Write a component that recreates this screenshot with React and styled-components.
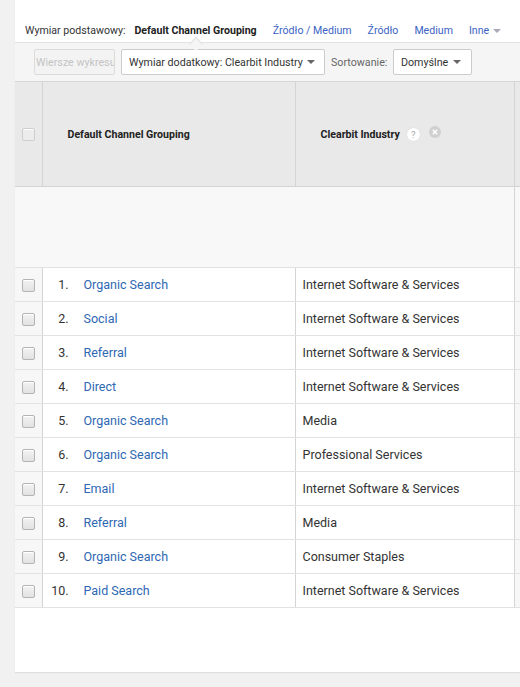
import React from "react";
import styled, { createGlobalStyle } from "styled-components";

const Global = createGlobalStyle`
  html, body { margin: 0; padding: 0; background: #f1f1f1; }
  body { font-family: Roboto, "Liberation Sans", Arial, sans-serif; color: #333; }
`;

const Page = styled.div`
  padding-left: 15px;
  height: 687px;
  overflow: hidden;
`;

const Panel = styled.div`
  background: #fff;
  height: 672px;
  overflow: hidden;
  box-shadow: 0 1px 1px rgba(0,0,0,0.08);
`;

const Nav = styled.div`
  display: flex;
  align-items: center;
  height: 43px;
  padding: 18px 0 0 10px;
  box-sizing: border-box;
  font-size: 10.6px;
  border-bottom: 1px solid #e2e2e2;
  white-space: nowrap;
`;

const NavLabel = styled.span`
  color: #333;
  margin-right: 9px;
`;

const NavItem = styled.span`
  position: relative;
  margin-right: 16px;
  color: ${p => (p.$active ? "#222" : "#3b63c4")};
  font-weight: ${p => (p.$active ? 700 : 400)};
  ${p =>
    p.$active &&
    `
    &::after {
      content: "";
      position: absolute;
      left: 50%;
      bottom: -12px;
      width: 9px;
      height: 9px;
      margin-left: -5px;
      background: #f5f5f5;
      border-left: 1px solid #e2e2e2;
      border-top: 1px solid #e2e2e2;
      transform: rotate(45deg);
    }
  `}
`;

const Caret = styled.span`
  display: inline-block;
  width: 0;
  height: 0;
  margin-left: 4px;
  vertical-align: middle;
  border-left: 4px solid transparent;
  border-right: 4px solid transparent;
  border-top: 4px solid ${p => p.$color || "#aaa"};
`;

const Toolbar = styled.div`
  display: flex;
  align-items: center;
  gap: 6px;
  height: 38px;
  padding: 0 0 0 19px;
  box-sizing: border-box;
  background: #f5f5f5;
  font-size: 10.7px;
  white-space: nowrap;
`;

const Button = styled.div`
  display: flex;
  align-items: center;
  height: 26px;
  box-sizing: border-box;
  padding-left: ${p => (p.$disabled ? "1px" : "7px")};
  padding-right: ${p => (p.$disabled ? "0" : "10px")};
  width: ${p => p.$w};
  flex: none;
  border: 1px solid ${p => (p.$disabled ? "#dcdcdc" : "#ccc")};
  border-radius: 2px;
  background: ${p => (p.$disabled ? "#f3f3f3" : "#fff")};
  color: ${p => (p.$disabled ? "#c4c4c4" : "#333")};
  overflow: hidden;
  justify-content: space-between;
`;

const ToolLabel = styled.span`
  color: #666;
  width: 56px;
  flex: none;
`;

const Table = styled.table`
  border-collapse: collapse;
  table-layout: fixed;
  width: 540px;
  border-top: 1px solid #d6d6d6;
  font-size: 12.5px;
`;

const Col = styled.col`
  width: ${p => p.$w}px;
`;

const HeadCell = styled.th`
  height: 104px;
  background: #e9e9e9;
  border-left: 1px solid #d4d4d4;
  border-bottom: 1px solid #d4d4d4;
  text-align: left;
  padding: 0 0 0 ${p => p.$pl || 0}px;
  font-size: 10.6px;
  font-weight: 700;
  color: #222;
  vertical-align: middle;
  white-space: nowrap;
  &:first-child { border-left: none; padding: 0 0 0 7px; }
`;

const HeadInner = styled.div`
  display: flex;
  align-items: center;
`;

const SpacerCell = styled.td`
  height: 80px;
  background: #f8f8f8;
  border-left: 1px solid ${p => (p.$first ? "transparent" : "#d4d4d4")};
  border-bottom: 1px solid #e2e2e2;
  padding: 0;
  &:first-child { border-left: none; }
`;

const Cell = styled.td`
  height: 33px;
  padding: 0;
  border-left: 1px solid #d4d4d4;
  border-bottom: 1px solid #e2e2e2;
  background: ${p => (p.$gray ? "#f7f7f7" : "#fff")};
  white-space: nowrap;
  color: #333;
  &:first-child { border-left: none; padding-left: 7px; }
`;

const Check = styled.span`
  display: inline-block;
  vertical-align: middle;
  width: 11px;
  height: 11px;
  border: 1px solid #b4b4b4;
  border-radius: 2px;
  background: linear-gradient(#f2f2f2, #e2e2e2);
  box-shadow: inset 0 1px 0 #fff;
`;

const HeadCheck = styled(Check)`
  border-color: #cfcfcf;
  background: #ececec;
`;

const RowInner = styled.div`
  display: flex;
  align-items: center;
  padding-left: ${p => p.$pl}px;
`;

const Num = styled.span`
  width: 26px;
  text-align: right;
  padding-right: 15px;
  color: #333;
`;

const Link = styled.span`
  color: #2e68b3;
`;

const HelpIcon = styled.span`
  display: inline-flex;
  align-items: center;
  justify-content: center;
  width: 13px;
  height: 13px;
  margin-left: 6px;
  border-radius: 50%;
  background: #fff;
  border: 1px solid #e2e2e2;
  color: #aaa;
  font-size: 9.5px;
  font-weight: 400;
  margin-top: 1px;
`;

const CloseIcon = styled.span`
  display: inline-flex;
  margin-left: 8px;
  margin-top: -5px;
`;

const rows = [
  ["Organic Search", "Internet Software & Services"],
  ["Social", "Internet Software & Services"],
  ["Referral", "Internet Software & Services"],
  ["Direct", "Internet Software & Services"],
  ["Organic Search", "Media"],
  ["Organic Search", "Professional Services"],
  ["Email", "Internet Software & Services"],
  ["Referral", "Media"],
  ["Organic Search", "Consumer Staples"],
  ["Paid Search", "Internet Software & Services"],
];

export default function App() {
  return (
    <>
      <Global />
      <Page>
        <Panel>
          <Nav>
            <NavLabel>Wymiar podstawowy:</NavLabel>
            <NavItem $active>Default Channel Grouping</NavItem>
            <NavItem>Źródło / Medium</NavItem>
            <NavItem>Źródło</NavItem>
            <NavItem>Medium</NavItem>
            <NavItem>
              Inne<Caret $color="#aab" />
            </NavItem>
          </Nav>
          <Toolbar>
            <Button $disabled $w="81px">Wiersze wykresu</Button>
            <Button $w="204px">
              Wymiar dodatkowy: Clearbit Industry <Caret $color="#666" />
            </Button>
            <ToolLabel>Sortowanie:</ToolLabel>
            <Button $w="79px">
              Domyślne <Caret $color="#666" />
            </Button>
          </Toolbar>
          <Table>
            <colgroup>
              <Col $w={27} />
              <Col $w={253} />
              <Col $w={219} />
              <Col $w={41} />
            </colgroup>
            <thead>
              <tr>
                <HeadCell>
                  <HeadCheck />
                </HeadCell>
                <HeadCell $pl={25}>Default Channel Grouping</HeadCell>
                <HeadCell $pl={25}>
                  <HeadInner>
                    Clearbit Industry
                    <HelpIcon>?</HelpIcon>
                    <CloseIcon>
                      <svg width="12" height="12" viewBox="0 0 12 12">
                        <circle cx="6" cy="6" r="6" fill="#d0d0d0" />
                        <path d="M3.8 3.8 L8.2 8.2 M8.2 3.8 L3.8 8.2" stroke="#fff" strokeWidth="1.5" />
                      </svg>
                    </CloseIcon>
                  </HeadInner>
                </HeadCell>
                <HeadCell />
              </tr>
            </thead>
            <tbody>
              <tr>
                <SpacerCell />
                <SpacerCell $first />
                <SpacerCell $first />
                <SpacerCell />
              </tr>
              {rows.map(([a, b], i) => (
                <tr key={i}>
                  <Cell $gray>
                    <Check />
                  </Cell>
                  <Cell>
                    <RowInner $pl={0}>
                      <Num>{i + 1}.</Num>
                      <Link>{a}</Link>
                    </RowInner>
                  </Cell>
                  <Cell>
                    <RowInner $pl={7}>{b}</RowInner>
                  </Cell>
                  <Cell $gray />
                </tr>
              ))}
            </tbody>
          </Table>
        </Panel>
      </Page>
    </>
  );
}
